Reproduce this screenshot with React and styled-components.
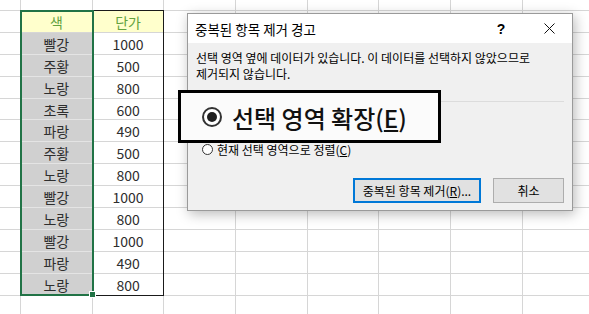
import styled, { createGlobalStyle } from "styled-components";

const GlobalStyle = createGlobalStyle`
  html, body {
    margin: 0;
    padding: 0;
    background: #fff;
  }
  body {
    font-family: "Noto Sans CJK KR", "Noto Sans", sans-serif;
  }
`;

const Page = styled.div`
  position: relative;
  width: 589px;
  height: 314px;
  overflow: hidden;
  background: #fff;
`;

const Sheet = styled.div`
  display: grid;
  grid-template-columns: 21px repeat(8, 71.7px);
  grid-template-rows: 11px repeat(14, 21.9px);
`;

const Cell = styled.div`
  box-sizing: border-box;
  display: flex;
  align-items: center;
  justify-content: center;
  border-right: 1px solid #d6d6d6;
  border-bottom: 1px solid #d6d6d6;
  font-size: 14px;
  color: #2e2e2e;
  padding-top: 1px;
  background: ${(p) =>
    p.$kind === "head" ? "#ffffcc" : p.$kind === "name" ? "#d0d0d0" : "#fff"};
  ${(p) => p.$kind === "head" && "color: #62a23e;"}
  ${(p) => p.$kind === "name" && "border-bottom-color: #e4e4e4;"}
`;

const TableFrame = styled.div`
  grid-column: 2 / 4;
  grid-row: 2 / 15;
  box-sizing: border-box;
  margin: -1px 0 0 -1px;
  border: 1px solid #1a1a1a;
  pointer-events: none;
`;

const Selection = styled.div`
  position: relative;
  grid-column: 2 / 3;
  grid-row: 2 / 15;
  box-sizing: border-box;
  margin: -1px -1px 0 -1px;
  border: 2px solid #217346;
  pointer-events: none;
`;

const FillHandle = styled.span`
  position: absolute;
  right: -4px;
  bottom: -4px;
  width: 5px;
  height: 5px;
  background: #217346;
  border: 1px solid #fff;
`;

const Dialog = styled.div`
  position: absolute;
  left: 187px;
  top: 13px;
  width: 386px;
  height: 198px;
  box-sizing: border-box;
  display: flex;
  flex-direction: column;
  background: #f0f0f0;
  border: 1px solid #9a9a9a;
  box-shadow: 2px 3px 12px rgba(0, 0, 0, 0.28);
  font-size: 12px;
  color: #000;
`;

const TitleBar = styled.div`
  height: 29px;
  display: flex;
  align-items: center;
  background: #fff;
  padding-left: 7px;
`;

const Title = styled.div`
  flex: 1;
  font-size: 13.5px;
  padding-top: 1px;
`;

const Help = styled.div`
  width: 20px;
  text-align: center;
  font-size: 14px;
  font-weight: bold;
  font-family: "Liberation Sans", sans-serif;
  margin-right: 28px;
`;

const Close = styled.div`
  width: 20px;
  display: flex;
  justify-content: center;
  margin-right: 13px;
`;

const Body = styled.div`
  flex: 1;
  display: flex;
  flex-direction: column;
  padding: 7px 8px 7px 8px;
`;

const Message = styled.p`
  margin: 0;
  line-height: 16px;
`;

const Divider = styled.div`
  height: 1px;
  margin: 19px 0 0 0;
  background: #dcdcdc;
`;

const Options = styled.div`
  display: flex;
  flex-direction: column;
  gap: 9px;
  padding: 14px 0 0 6px;
`;

const Option = styled.label`
  display: flex;
  align-items: center;
  gap: 4px;
  height: 16px;
  visibility: ${(p) => (p.$covered ? "hidden" : "visible")};
`;

const Radio = styled.span`
  box-sizing: border-box;
  width: ${(p) => p.$size}px;
  height: ${(p) => p.$size}px;
  border-radius: 50%;
  border: ${(p) => (p.$size > 14 ? 2 : 1)}px solid #333;
  background: #fff;
  display: flex;
  align-items: center;
  justify-content: center;
  flex-shrink: 0;
  &::after {
    content: "";
    display: ${(p) => (p.$checked ? "block" : "none")};
    width: ${(p) => Math.round(p.$size / 2)}px;
    height: ${(p) => Math.round(p.$size / 2)}px;
    border-radius: 50%;
    background: #1f1f1f;
  }
`;

const Buttons = styled.div`
  margin-top: auto;
  display: flex;
  justify-content: flex-end;
  gap: 12px;
`;

const Button = styled.button`
  box-sizing: border-box;
  height: 25px;
  width: ${(p) => p.$width}px;
  font: inherit;
  font-size: 12px;
  color: #000;
  background: #e1e1e1;
  border: ${(p) => (p.$primary ? "2px solid #0078d7" : "1px solid #adadad")};
  padding: 0;
`;

const Callout = styled.div`
  position: absolute;
  left: -10px;
  top: 76px;
  width: 263px;
  height: 53px;
  box-sizing: border-box;
  border: 3px solid #000;
  background: #fbfbfb;
  display: flex;
  align-items: center;
  gap: 10px;
  padding: 1px 0 0 21px;
  font-size: 24px;
  font-weight: 500;
  color: #111;
`;

const names = ["빨강", "주황", "노랑", "초록", "파랑", "주황", "노랑", "빨강", "노랑", "빨강", "파랑", "노랑"];
const prices = [1000, 500, 800, 600, 490, 500, 800, 1000, 800, 1000, 490, 800];

function cellFor(r, c) {
  if (r === 1 && c === 1) return { kind: "head", text: "색" };
  if (r === 1 && c === 2) return { kind: "head", text: "단가" };
  if (r >= 2 && r <= 13 && c === 1) return { kind: "name", text: names[r - 2] };
  if (r >= 2 && r <= 13 && c === 2) return { kind: "price", text: prices[r - 2] };
  return { kind: "plain", text: "" };
}

export default function App() {
  const cells = [];
  for (let r = 0; r < 15; r++) {
    for (let c = 0; c < 9; c++) {
      const { kind, text } = cellFor(r, c);
      cells.push(
        <Cell key={`${r}-${c}`} $kind={kind} style={{ gridRow: r + 1, gridColumn: c + 1 }}>
          {text}
        </Cell>
      );
    }
  }

  return (
    <Page>
      <GlobalStyle />
      <Sheet>
        {cells}
        <TableFrame />
        <Selection>
          <FillHandle />
        </Selection>
      </Sheet>

      <Dialog>
        <TitleBar>
          <Title>중복된 항목 제거 경고</Title>
          <Help>?</Help>
          <Close>
            <svg width="11" height="11" viewBox="0 0 11 11">
              <path d="M0.5 0.5 L10.5 10.5 M10.5 0.5 L0.5 10.5" stroke="#111" strokeWidth="1" />
            </svg>
          </Close>
        </TitleBar>
        <Body>
          <Message>
            선택 영역 옆에 데이터가 있습니다. 이 데이터를 선택하지 않았으므로
            <br />
            제거되지 않습니다.
          </Message>
          <Divider />
          <Options>
            {/* covered by the zoomed callout below */}
            <Option $covered>
              <Radio $size={11} $checked />
              <span>선택 영역 확장(<u>E</u>)</span>
            </Option>
            <Option>
              <Radio $size={11} />
              <span>현재 선택 영역으로 정렬(<u>C</u>)</span>
            </Option>
          </Options>
          <Buttons>
            <Button $primary $width={128}>
              중복된 항목 제거(<u>R</u>)...
            </Button>
            <Button $width={71}>취소</Button>
          </Buttons>
        </Body>
        <Callout>
          <Radio $size={20} $checked />
          <span>
            선택 영역 확장(<u>E</u>)
          </span>
        </Callout>
      </Dialog>
    </Page>
  );
}
